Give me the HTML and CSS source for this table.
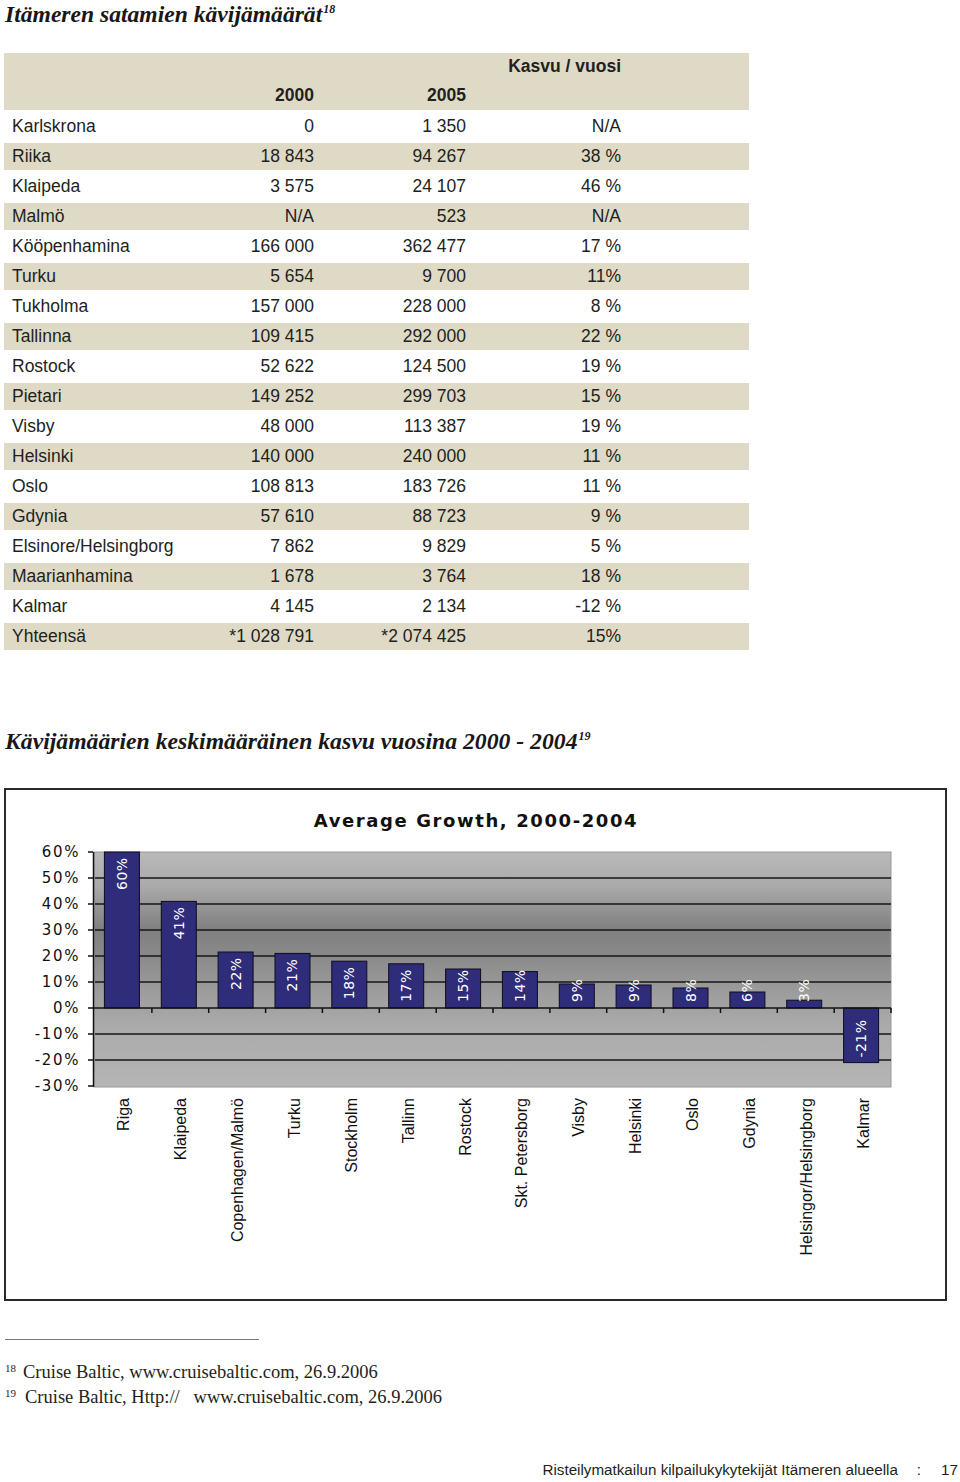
FILE: index.html
```html
<!DOCTYPE html>
<html lang="fi">
<head>
<meta charset="utf-8">
<title>Itämeren satamien kävijämäärät</title>
<link rel="stylesheet" href="styles.css">
</head>
<body>
<main class="page">
  <h1 class="title">Itämeren satamien kävijämäärät<sup>18</sup></h1>

  <table class="ports">
    <colgroup>
      <col class="c-name"><col class="c-y1"><col class="c-y2"><col class="c-grow"><col class="c-rest">
    </colgroup>
    <thead>
      <tr class="head">
        <th></th>
        <th><div class="l1"></div><div class="l2">2000</div></th>
        <th><div class="l1"></div><div class="l2">2005</div></th>
        <th><div class="l1">Kasvu / vuosi</div><div class="l2"></div></th>
        <th></th>
      </tr>
    </thead>
    <tbody>
      <tr><td>Karlskrona</td><td>0</td><td>1 350</td><td>N/A</td><td></td></tr>
      <tr class="alt"><td>Riika</td><td>18 843</td><td>94 267</td><td>38 %</td><td></td></tr>
      <tr><td>Klaipeda</td><td>3 575</td><td>24 107</td><td>46 %</td><td></td></tr>
      <tr class="alt"><td>Malmö</td><td>N/A</td><td>523</td><td>N/A</td><td></td></tr>
      <tr><td>Kööpenhamina</td><td>166 000</td><td>362 477</td><td>17 %</td><td></td></tr>
      <tr class="alt"><td>Turku</td><td>5 654</td><td>9 700</td><td>11%</td><td></td></tr>
      <tr><td>Tukholma</td><td>157 000</td><td>228 000</td><td>8 %</td><td></td></tr>
      <tr class="alt"><td>Tallinna</td><td>109 415</td><td>292 000</td><td>22 %</td><td></td></tr>
      <tr><td>Rostock</td><td>52 622</td><td>124 500</td><td>19 %</td><td></td></tr>
      <tr class="alt"><td>Pietari</td><td>149 252</td><td>299 703</td><td>15 %</td><td></td></tr>
      <tr><td>Visby</td><td>48 000</td><td>113 387</td><td>19 %</td><td></td></tr>
      <tr class="alt"><td>Helsinki</td><td>140 000</td><td>240 000</td><td>11 %</td><td></td></tr>
      <tr><td>Oslo</td><td>108 813</td><td>183 726</td><td>11 %</td><td></td></tr>
      <tr class="alt"><td>Gdynia</td><td>57 610</td><td>88 723</td><td>9 %</td><td></td></tr>
      <tr><td>Elsinore/Helsingborg</td><td>7 862</td><td>9 829</td><td>5 %</td><td></td></tr>
      <tr class="alt"><td>Maarianhamina</td><td>1 678</td><td>3 764</td><td>18 %</td><td></td></tr>
      <tr><td>Kalmar</td><td>4 145</td><td>2 134</td><td>-12 %</td><td></td></tr>
      <tr class="alt"><td>Yhteensä</td><td>*1 028 791</td><td>*2 074 425</td><td>15%</td><td></td></tr>
    </tbody>
  </table>

  <h2 class="title title2">Kävijämäärien keskimääräinen kasvu vuosina 2000 - 2004<sup>19</sup></h2>

  <div class="chart">
    <svg class="chart-svg" width="939" height="509" viewBox="6 789 939 509" xmlns="http://www.w3.org/2000/svg">
      <defs>
        <linearGradient id="plotbg" x1="0" y1="0" x2="0" y2="1">
          <stop offset="0" stop-color="#b9b9b9"/>
          <stop offset="0.15" stop-color="#a9a9a9"/>
          <stop offset="0.33" stop-color="#7f7f7f"/>
          <stop offset="0.45" stop-color="#8b8b8b"/>
          <stop offset="0.6" stop-color="#9d9d9d"/>
          <stop offset="0.75" stop-color="#ababab"/>
          <stop offset="1" stop-color="#b5b5b5"/>
        </linearGradient>
      </defs>
      <text class="ch-title" x="476" y="826" text-anchor="middle">Average Growth, 2000-2004</text>

      <rect x="94" y="851" width="797" height="235" fill="url(#plotbg)" stroke="#9a9a9a" stroke-width="1"/>

      <g class="grid" stroke="#161616" stroke-width="1.5">
        <line x1="95" y1="877" x2="891" y2="877"/>
        <line x1="95" y1="903" x2="891" y2="903"/>
        <line x1="95" y1="929" x2="891" y2="929"/>
        <line x1="95" y1="955" x2="891" y2="955"/>
        <line x1="95" y1="981" x2="891" y2="981"/>
        <line x1="95" y1="1033" x2="891" y2="1033"/>
        <line x1="95" y1="1059" x2="891" y2="1059"/>
      </g>

      <g class="axis" stroke="#111" stroke-width="1.5">
        <line x1="93.5" y1="851" x2="93.5" y2="1086"/>
        <line x1="88" y1="851" x2="93" y2="851"/>
        <line x1="88" y1="877" x2="93" y2="877"/>
        <line x1="88" y1="903" x2="93" y2="903"/>
        <line x1="88" y1="929" x2="93" y2="929"/>
        <line x1="88" y1="955" x2="93" y2="955"/>
        <line x1="88" y1="981" x2="93" y2="981"/>
        <line x1="88" y1="1007" x2="93" y2="1007"/>
        <line x1="88" y1="1033" x2="93" y2="1033"/>
        <line x1="88" y1="1059" x2="93" y2="1059"/>
        <line x1="88" y1="1085" x2="93" y2="1085"/>
      </g>

      <g class="ylab" text-anchor="end">
        <text x="80" y="856">60%</text>
        <text x="80" y="882">50%</text>
        <text x="80" y="908">40%</text>
        <text x="80" y="934">30%</text>
        <text x="80" y="960">20%</text>
        <text x="80" y="986">10%</text>
        <text x="80" y="1012">0%</text>
        <text x="80" y="1038">-10%</text>
        <text x="80" y="1064">-20%</text>
        <text x="80" y="1090">-30%</text>
      </g>

      <g class="bars" fill="#2f2c79" stroke="#0c0c1e" stroke-width="1">
        <rect x="104.4" y="851" width="35" height="156"/>
        <rect x="161.3" y="900.4" width="35" height="106.6"/>
        <rect x="218.1" y="951" width="35" height="56"/>
        <rect x="275.0" y="952.4" width="35" height="54.6"/>
        <rect x="331.8" y="960.2" width="35" height="46.8"/>
        <rect x="388.7" y="962.8" width="35" height="44.2"/>
        <rect x="445.6" y="968" width="35" height="39"/>
        <rect x="502.4" y="970.6" width="35" height="36.4"/>
        <rect x="559.3" y="983" width="35" height="24"/>
        <rect x="616.1" y="984" width="35" height="23"/>
        <rect x="673.0" y="987" width="35" height="20"/>
        <rect x="729.9" y="991" width="35" height="16"/>
        <rect x="786.7" y="999.2" width="35" height="7.8"/>
        <rect x="843.6" y="1007" width="35" height="54.6"/>
      </g>

      <g class="axis" stroke="#111" stroke-width="1.5">
        <line x1="93" y1="1007" x2="891" y2="1007"/>
        <line x1="151.9" y1="1007" x2="151.9" y2="1012"/>
        <line x1="208.7" y1="1007" x2="208.7" y2="1012"/>
        <line x1="265.6" y1="1007" x2="265.6" y2="1012"/>
        <line x1="322.4" y1="1007" x2="322.4" y2="1012"/>
        <line x1="379.3" y1="1007" x2="379.3" y2="1012"/>
        <line x1="436.2" y1="1007" x2="436.2" y2="1012"/>
        <line x1="493.0" y1="1007" x2="493.0" y2="1012"/>
        <line x1="549.9" y1="1007" x2="549.9" y2="1012"/>
        <line x1="606.7" y1="1007" x2="606.7" y2="1012"/>
        <line x1="663.6" y1="1007" x2="663.6" y2="1012"/>
        <line x1="720.5" y1="1007" x2="720.5" y2="1012"/>
        <line x1="777.3" y1="1007" x2="777.3" y2="1012"/>
        <line x1="834.2" y1="1007" x2="834.2" y2="1012"/>
        <line x1="891" y1="1007" x2="891" y2="1012"/>
      </g>

      <g class="blab">
        <text x="126.9" y="889" transform="rotate(-90 126.9 889)">60%</text>
        <text x="183.8" y="938.4" transform="rotate(-90 183.8 938.4)">41%</text>
        <text x="240.6" y="989" transform="rotate(-90 240.6 989)">22%</text>
        <text x="297.5" y="990.4" transform="rotate(-90 297.5 990.4)">21%</text>
        <text x="354.3" y="998.2" transform="rotate(-90 354.3 998.2)">18%</text>
        <text x="411.2" y="1000.8" transform="rotate(-90 411.2 1000.8)">17%</text>
        <text x="468.1" y="1001" transform="rotate(-90 468.1 1001)">15%</text>
        <text x="524.9" y="1001" transform="rotate(-90 524.9 1001)">14%</text>
        <text x="581.8" y="1001" transform="rotate(-90 581.8 1001)">9%</text>
        <text x="638.6" y="1001" transform="rotate(-90 638.6 1001)">9%</text>
        <text x="695.5" y="1001" transform="rotate(-90 695.5 1001)">8%</text>
        <text x="752.4" y="1001" transform="rotate(-90 752.4 1001)">6%</text>
        <text x="809.2" y="1001" transform="rotate(-90 809.2 1001)">3%</text>
        <text x="866.1" y="1056.6" transform="rotate(-90 866.1 1056.6)">-21%</text>
      </g>

      <g class="xlab" text-anchor="end">
        <text x="129.4" y="1097" transform="rotate(-90 129.4 1097)">Riga</text>
        <text x="186.3" y="1097" transform="rotate(-90 186.3 1097)">Klaipeda</text>
        <text x="243.1" y="1097" transform="rotate(-90 243.1 1097)">Copenhagen/Malmö</text>
        <text x="300.0" y="1097" transform="rotate(-90 300.0 1097)">Turku</text>
        <text x="356.8" y="1097" transform="rotate(-90 356.8 1097)">Stockholm</text>
        <text x="413.7" y="1097" transform="rotate(-90 413.7 1097)">Tallinn</text>
        <text x="470.6" y="1097" transform="rotate(-90 470.6 1097)">Rostock</text>
        <text x="527.4" y="1097" transform="rotate(-90 527.4 1097)">Skt. Petersborg</text>
        <text x="584.3" y="1097" transform="rotate(-90 584.3 1097)">Visby</text>
        <text x="641.1" y="1097" transform="rotate(-90 641.1 1097)">Helsinki</text>
        <text x="698.0" y="1097" transform="rotate(-90 698.0 1097)">Oslo</text>
        <text x="754.9" y="1097" transform="rotate(-90 754.9 1097)">Gdynia</text>
        <text x="811.7" y="1097" transform="rotate(-90 811.7 1097)">Helsingor/Helsingborg</text>
        <text x="868.6" y="1097" transform="rotate(-90 868.6 1097)">Kalmar</text>
      </g>
    </svg>
  </div>

  <hr class="fn-rule">
  <ol class="footnotes">
    <li><sup>18</sup><span class="fn1">Cruise Baltic, www.cruisebaltic.com, 26.9.2006</span></li>
    <li><sup>19</sup><span class="fn2">Cruise Baltic, Http://&nbsp;&nbsp; www.cruisebaltic.com, 26.9.2006</span></li>
  </ol>

  <footer class="footer">
    <span class="ft-text">Risteilymatkailun kilpailukykytekijät Itämeren alueella</span>
    <span class="ft-colon">:</span>
    <span class="ft-page">17</span>
  </footer>
</main>
</body>
</html>
```

FILE: styles.css
```css
html, body {
  margin: 0;
  padding: 0;
  background: #ffffff;
}

.page {
  width: 960px;
  padding-left: 4px;
  box-sizing: border-box;
  color: #231f20;
}

.title {
  margin: 0;
  padding-left: 1px;
  font-family: "Liberation Serif", "Times New Roman", serif;
  font-style: italic;
  font-weight: bold;
  font-size: 23.6px;
  line-height: 28px;
  color: #1a1718;
}

.title sup {
  font-size: 12px;
  line-height: 0;
  vertical-align: 9px;
  margin-left: 1px;
}

.title2 {
  margin-top: 73px;
  line-height: 30px;
  font-size: 23.7px;
}

/* table */
.ports {
  margin-top: 22px;
  width: 745px;
  table-layout: fixed;
  border-collapse: separate;
  border-spacing: 0 3px;
  font-family: "Liberation Sans", Arial, sans-serif;
  font-size: 17.5px;
  color: #231f20;
}

.c-name { width: 196px; }
.c-y1 { width: 114px; }
.c-y2 { width: 152px; }
.c-grow { width: 155px; }
.c-rest { width: 128px; }

.ports th {
  background: #dedac6;
  padding: 0;
  font-weight: bold;
  text-align: right;
  height: 57px;
  vertical-align: top;
}

.ports .l1 {
  height: 26px;
  line-height: 26px;
}

.ports .l2 {
  height: 31px;
  line-height: 32px;
}

.ports td {
  padding: 0;
  height: 27px;
  line-height: 27px;
  text-align: right;
  white-space: nowrap;
}

.ports td:first-child {
  text-align: left;
  padding-left: 8px;
}

.ports tr.alt td {
  background: #dedac6;
}

/* chart */
.chart {
  margin-top: 32px;
  width: 939px;
  height: 509px;
  border: 2px solid #2a2a2a;
}

.chart-svg {
  display: block;
}

.ch-title {
  font-family: "DejaVu Sans", Verdana, sans-serif;
  font-weight: bold;
  font-size: 18px;
  letter-spacing: 1.6px;
  fill: #111;
}

.ylab text {
  font-family: "DejaVu Sans", Verdana, sans-serif;
  font-size: 15px;
  letter-spacing: 1.6px;
  fill: #111;
}

.blab text {
  font-family: "DejaVu Sans", Verdana, sans-serif;
  font-size: 14px;
  letter-spacing: 0.5px;
  fill: #ffffff;
}

.xlab text {
  font-family: "Liberation Sans", Arial, sans-serif;
  font-size: 16px;
  fill: #111;
}

/* footnotes */
.fn-rule {
  margin: 38px 0 0 1px;
  width: 254px;
  height: 0;
  border: 0;
  border-top: 1px solid #7a7a7a;
}

.footnotes {
  list-style: none;
  margin: 20px 0 0 0;
  padding: 0 0 0 1px;
  font-family: "Liberation Serif", "Times New Roman", serif;
  font-size: 18.5px;
  line-height: 25px;
  color: #231f20;
}

.footnotes sup {
  font-size: 11px;
  line-height: 0;
  vertical-align: 6px;
  margin-right: 7px;
}

.fn2 {
  margin-left: 2px;
}

/* footer */
.footer {
  margin-top: 50px;
  display: flex;
  justify-content: flex-end;
  padding-right: 2px;
  font-family: "Liberation Sans", Arial, sans-serif;
  font-size: 15.2px;
  line-height: 20px;
  color: #231f20;
}

.ft-colon {
  margin-left: 19px;
}

.ft-page {
  margin-left: 20px;
}
```
